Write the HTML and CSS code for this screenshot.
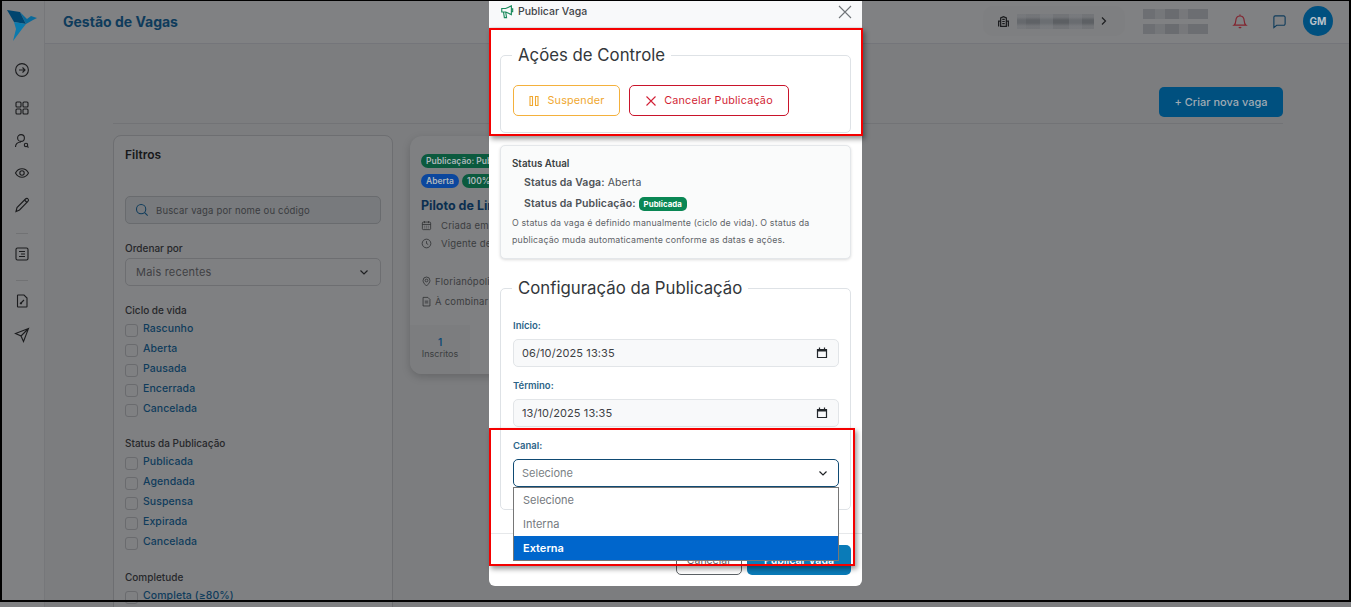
FILE: index.html
```html
<!DOCTYPE html>
<html lang="pt-BR">
<head>
<meta charset="utf-8">
<title>Gestão de Vagas</title>
<link rel="stylesheet" href="styles.css">
</head>
<body>
<div class="shot">
  <div class="app">
    <aside class="sidebar">
      <svg class="logo" viewBox="0 0 32 32" width="32" height="32"><polygon points="1,1 14,3 20,15 8,13" fill="#00456f"/><polygon points="14,3 20,15 27,11 31,9 25,7 21,10" fill="#0a6a9a"/><polygon points="8,13 20,15 16,20 7,32 10,20" fill="#0b7aad"/></svg>
      <svg class="ico m-first" viewBox="0 0 16 16"><circle cx="8" cy="8" r="6.400"/><path d="M5 8h6M8.500 5.500 11 8l-2.500 2.500"/></svg>
      <svg class="ico m-a" viewBox="0 0 16 16"><rect x="2" y="2" width="5" height="5" rx="1"/><rect x="9" y="2" width="5" height="5" rx="1"/><rect x="2" y="9" width="5" height="5" rx="1"/><rect x="9" y="9" width="5" height="5" rx="1"/></svg>
      <svg class="ico m-b" viewBox="0 0 16 16"><circle cx="7" cy="5" r="3.400"/><path d="M1.500 14c0-3 2-5 5.500-5"/><circle cx="12" cy="12" r="1.700"/><path d="m13.300 13.300 1.200 1.200"/></svg>
      <svg class="ico m-c" viewBox="0 0 16 16"><path d="M1.500 8C3 5.200 5.300 3.800 8 3.800s5 1.400 6.500 4.200c-1.500 2.800-3.800 4.200-6.500 4.200S3 10.800 1.500 8z"/><circle cx="8" cy="8" r="2.200"/></svg>
      <svg class="ico m-c" viewBox="0 0 16 16"><path d="M2 14.500 3 10.500 11.500 2c.8-.8 2-.8 2.600 0 .6.700.5 1.700-.2 2.400L5.500 13z"/><path d="m10.500 3 2.500 2.500"/></svg>
      <div class="rule m-d"></div>
      <svg class="ico m-e" viewBox="0 0 16 16"><rect x="2" y="2" width="12" height="12" rx="1.500"/><path d="M5 5.500h6M7 8h4M5 10.500h6"/></svg>
      <div class="rule m-f"></div>
      <svg class="ico m-h" viewBox="0 0 16 16"><path d="M4 2h6l3 3v8.500a.5.500 0 0 1-.5.500h-8.500a.5.500 0 0 1-.5-.5V2.500A.5.500 0 0 1 4 2z"/><path d="m6 11 4-4M6.300 9.500l1.500 1.500"/></svg>
      <svg class="ico m-g" viewBox="0 0 16 16"><path d="M14.500 1.500 1.500 6.500l5.500 2.500 2.500 5.500zM7 9l7.500-7.500"/></svg>
    </aside>
    <div class="main">
      <header class="topbar">
        <h1 class="title">Gestão de Vagas</h1>
        <div class="company">
          <svg class="ico-sm" viewBox="0 0 16 16"><path d="M4.500 14V3.500L8 2l3.500 1.500V14zM2 14V7.500h2.500M14 14V7.500h-2.500M6.500 5.500h3M6.500 8h3M6.500 10.500h3"/></svg>
          <span class="pixels pixels-company"></span>
          <svg class="chev" viewBox="0 0 8 10"><path d="m2 1.500 3.500 3.500L2 8.500"/></svg>
        </div>
        <div class="user">
          <span class="pixels pixels-user"></span>
          <span class="pixels pixels-user"></span>
        </div>
        <svg class="bell" viewBox="0 0 16 16"><path d="M2 12.200c1.300-1 1.700-2.200 1.800-4.500C4 4.800 5.600 3 8 3s4 1.800 4.200 4.700c.1 2.300.5 3.500 1.800 4.500zM8 3V1.500M6.800 14.200c.6.500 1.800.5 2.400 0"/></svg>
        <svg class="chat" viewBox="0 0 16 16"><path d="M3.500 2h9A1.500 1.500 0 0 1 14 3.500v7a1.500 1.500 0 0 1-1.500 1.500H5l-3 2.500v-11A1.500 1.500 0 0 1 3.500 2z"/></svg>
        <div class="avatar">GM</div>
      </header>
      <div class="content">
        <div class="toolbar"><button class="create">+ Criar nova vaga</button></div>
        <div class="columns">
          <section class="filters">
            <h2 class="filters-title">Filtros</h2>
            <div class="search">
              <svg class="search-ico" viewBox="0 0 16 16"><circle cx="7" cy="7" r="5.300"/><path d="m11 11 3.500 3.500"/></svg>
              <span>Buscar vaga por nome ou código</span>
            </div>
            <div class="f-label order-label">Ordenar por</div>
            <div class="order">
              <span>Mais recentes</span>
              <svg class="caret" viewBox="0 0 12 12"><path d="m2.500 4.500 3.500 3.500 3.500-3.500"/></svg>
            </div>
            <div class="f-label group-first">Ciclo de vida</div>
            <div class="check"><i></i>Rascunho</div>
            <div class="check"><i></i>Aberta</div>
            <div class="check"><i></i>Pausada</div>
            <div class="check"><i></i>Encerrada</div>
            <div class="check"><i></i>Cancelada</div>
            <div class="f-label group">Status da Publicação</div>
            <div class="check"><i></i>Publicada</div>
            <div class="check"><i></i>Agendada</div>
            <div class="check"><i></i>Suspensa</div>
            <div class="check"><i></i>Expirada</div>
            <div class="check"><i></i>Cancelada</div>
            <div class="f-label group group-last">Completude</div>
            <div class="check"><i></i>Completa (≥80%)</div>
          </section>
          <article class="job">
            <div class="job-body">
              <div class="chips"><span class="chip green">Publicação: Publicada</span></div>
              <div class="chips"><span class="chip blue">Aberta</span><span class="chip green">100%</span></div>
              <h3 class="job-title">Piloto de Linha</h3>
              <div class="meta"><svg class="ico-xs" viewBox="0 0 16 16"><rect x="2" y="3" width="12" height="11" rx="1.500"/><path d="M2 6.500h12M5 1.500v3M11 1.500v3M5 9h1M7.500 9h1M10 9h1M5 11.500h1M7.500 11.500h1M10 11.500h1"/></svg>Criada em</div>
              <div class="meta"><svg class="ico-xs" viewBox="0 0 16 16"><circle cx="8" cy="8" r="6.300"/><path d="M8 4.500V8l2.500 1.500"/></svg>Vigente de</div>
              <div class="place first"><svg class="ico-xs" viewBox="0 0 16 16"><path d="M8 14.500C5 11.500 3 9.300 3 6.500a5 5 0 0 1 10 0c0 2.800-2 5-5 8z"/><circle cx="8" cy="6.500" r="2"/></svg>Florianópolis</div>
              <div class="place"><svg class="ico-xs" viewBox="0 0 16 16"><path d="M3 2h7l3 3v9.500H3zM5.500 7.500h5M5.500 10h5"/></svg>À combinar</div>
            </div>
            <div class="job-foot"><b>1</b><span>Inscritos</span></div>
          </article>
        </div>
      </div>
    </div>
  </div>

  <div class="modal">
    <div class="modal-head">
      <svg class="mega" viewBox="0 0 16 16"><path d="M2 4h4.500L13 1v10L6.500 8H2zM4 8l1 6.500h2.500L6.500 8M13 4.500h1.500v3H13"/></svg>
      <span class="modal-title">Publicar Vaga</span>
      <svg class="close" viewBox="0 0 14 14"><path d="m1 1 12 12M13 1 1 13"/></svg>
    </div>
    <div class="modal-body">
      <fieldset class="box box-first">
        <legend>Ações de Controle</legend>
        <div class="actions">
          <button class="btn warn"><svg class="btn-ico" viewBox="0 0 12 12"><path d="M2 1.500h2.500v9H2zM7.500 1.500H10v9H7.500z"/></svg>Suspender</button>
          <button class="btn danger"><svg class="btn-ico" viewBox="0 0 12 12"><path d="m1.500 1.500 9 9M10.500 1.500l-9 9"/></svg>Cancelar Publicação</button>
        </div>
      </fieldset>
      <div class="status">
        <div class="status-head">Status Atual</div>
        <div class="status-line"><b>Status da Vaga:</b> Aberta</div>
        <div class="status-line second"><b>Status da Publicação:</b> <span class="pill">Publicada</span></div>
        <p class="note">O status da vaga é definido manualmente (ciclo de vida). O status da publicação muda automaticamente conforme as datas e ações.</p>
      </div>
      <fieldset class="box box-second">
        <legend>Configuração da Publicação</legend>
        <div class="fld-label">Início:</div>
        <div class="input"><span>06/10/2025 13:35</span><svg class="cal" viewBox="0 0 12 12"><path class="cal-top" d="M1.500 2h9v2.500h-9z"/><path d="M1.500 2.500h9v8h-9zM3.500 .5v2M8.500 .5v2"/></svg></div>
        <div class="fld-label">Término:</div>
        <div class="input"><span>13/10/2025 13:35</span><svg class="cal" viewBox="0 0 12 12"><path class="cal-top" d="M1.500 2h9v2.500h-9z"/><path d="M1.500 2.500h9v8h-9zM3.500 .5v2M8.500 .5v2"/></svg></div>
        <div class="fld-label">Canal:</div>
        <div class="select"><span>Selecione</span><svg class="caret dark" viewBox="0 0 12 12"><path d="m2.500 4.500 3.500 3.500 3.500-3.500"/></svg>
          <div class="listbox">
            <div class="option">Selecione</div>
            <div class="option">Interna</div>
            <div class="option on">Externa</div>
          </div>
        </div>
      </fieldset>
    </div>
    <div class="modal-foot">
      <button class="foot-btn ghost">Cancelar</button>
      <button class="foot-btn solid">Publicar Vaga</button>
    </div>
  </div>

  <div class="mark mark-top"></div>
  <div class="mark mark-bottom"></div>
  <div class="frame"></div>
</div>
</body>
</html>
```
FILE: styles.css
```css
* { box-sizing: border-box; }
html, body { margin: 0; height: 100%; overflow: hidden; }
body { font-family: Inter, "Liberation Sans", sans-serif; background: #7c7d7f; color: #2a2b2d; }
button { font-family: inherit; cursor: pointer; }
h1, h2, h3, p { margin: 0; }

.shot { position: relative; width: 1351px; height: 607px; overflow: hidden; }
.app { display: flex; height: 607px; }

.sidebar { width: 45px; flex: none; display: flex; flex-direction: column; align-items: center; background: #808183; border-right: 1px solid #76777a; padding-top: 9px; }
.logo { flex: none; }
.ico { width: 16px; height: 16px; fill: none; stroke: #1b1c1e; stroke-width: 1.100; flex: none; }
.m-first { margin-top: 21px; }
.m-a { margin-top: 22px; }
.m-b { margin-top: 17px; }
.m-c { margin-top: 16px; }
.m-d { margin-top: 20px; }
.m-e { margin-top: 12px; }
.m-f { margin-top: 18px; }
.m-h { margin-top: 12px; }
.m-g { margin-top: 18px; }
.rule { width: 12px; height: 1px; background: #717274; flex: none; }

.main { flex: 1; min-width: 0; display: flex; flex-direction: column; }
.topbar { height: 44px; flex: none; display: flex; align-items: center; padding: 0 18px 1px 18px; background: #808183; border-bottom: 1px solid #74757a; }
.title { font-size: 14px; font-weight: 700; color: #0e3b5b; flex: 1; }
.company { width: 142px; height: 30px; display: flex; align-items: center; background: #7e7f81; border-radius: 10px; padding-left: 14px; }
.ico-sm { width: 13px; height: 13px; fill: none; stroke: #1b1c1e; stroke-width: 1.500; flex: none; }
.pixels { display: block; }
.pixels-company { width: 77px; height: 15px; margin-left: 7px; background-image: linear-gradient(180deg, rgba(132,133,136,.55) 0 20%, rgba(132,133,136,0) 40% 60%, rgba(132,133,136,.55) 80%), linear-gradient(90deg, #66696d 0 12%, #5f6266 12% 30%, #6b6e72 30% 47%, #5c5f63 47% 68%, #696c70 68% 84%, #5d6064 84%); }
.chev { width: 8px; height: 10px; margin-left: 6px; fill: none; stroke: #1e1f21; stroke-width: 1.200; }
.user { margin-left: 18px; width: 65px; display: flex; flex-direction: column; gap: 5px; }
.pixels-user { height: 10px; width: 65px; background-image: linear-gradient(90deg, #6d6f73 0 18%, #75777a 18% 34%, #6a6c70 34% 56%, #77787b 56% 70%, #6c6e72 70%); }
.bell { width: 16px; height: 16px; margin-left: 24px; fill: none; stroke: #82242f; stroke-width: 1.200; flex: none; }
.chat { width: 15px; height: 15px; margin-left: 24px; fill: none; stroke: #0f3c5c; stroke-width: 1.200; flex: none; }
.avatar { width: 30px; height: 30px; margin-left: 16px; border-radius: 50%; background: #00507f; color: #b8c2ca; font-size: 10px; font-weight: 700; display: flex; align-items: center; justify-content: center; flex: none; }

.content { padding: 0 68px; flex: 1; min-height: 0; }
.toolbar { height: 80px; display: flex; justify-content: flex-end; align-items: flex-start; padding-top: 43px; border-bottom: 1px solid #727376; }
.create { width: 124px; height: 30px; border: 0; border-radius: 5px; background: #00507f; color: #a0abb4; font-size: 11px; font-weight: 500; }
.columns { display: flex; gap: 17px; align-items: flex-start; padding-top: 11px; }

.filters { width: 280px; flex: none; height: 520px; background: #7f8082; border: 1px solid #6d6e71; border-radius: 8px; padding: 11px 11px 0 11px; }
.filters-title { font-size: 12px; line-height: 15px; font-weight: 600; color: #17181a; }
.search { margin-top: 34px; height: 28px; border: 1px solid #696b6e; border-radius: 5px; background: #787a7d; display: flex; align-items: center; padding-left: 9px; color: #3a3c40; font-size: 9.500px; letter-spacing: .17px; }
.search-ico { width: 14px; height: 14px; fill: none; stroke: #0f3c5c; stroke-width: 1.200; margin-right: 7px; }
.f-label { font-size: 10px; line-height: 14px; font-weight: 500; color: #26272a; }
.order-label { margin-top: 17px; }
.order { margin-top: 3px; height: 28px; border: 1px solid #6d6e71; border-radius: 5px; display: flex; align-items: center; justify-content: space-between; padding: 0 10px; color: #3f4144; font-size: 11px; letter-spacing: .2px; }
.caret { width: 12px; height: 12px; fill: none; stroke: #1f2022; stroke-width: 1.200; }
.caret.dark { stroke: #1f2226; }
.group-first { margin-top: 17px; }
.group { margin-top: 14px; }
.group-last { margin-top: 15px; }
.check { height: 20px; display: flex; align-items: flex-start; color: #0f3c5c; font-size: 10.500px; font-weight: 500; line-height: 14px; letter-spacing: .08px; }
.group-first + .check, .group + .check { margin-top: 5px; }
.check i { width: 13px; height: 13px; margin: 2px 5px 0 0; border: 1px solid #6a6b6e; border-radius: 3px; flex: none; }

.job { width: 300px; flex: none; height: 238px; margin-top: 1px; background: #7f8082; border-radius: 12px; box-shadow: 0 3px 8px rgba(0,0,0,.18); display: flex; flex-direction: column; overflow: hidden; }
.job-body { flex: 1; padding: 18px 11px 0 11px; }
.chips { display: flex; gap: 3px; margin-bottom: 6px; }
.chip { height: 14px; border-radius: 7px; padding: 0 5px; font-size: 8.500px; font-weight: 600; line-height: 14px; color: #aeb6bb; white-space: nowrap; }
.green { background: #0b5a3e; }
.blue { background: #0b479e; }
.job-title { margin-top: 10px; font-size: 12.500px; line-height: 16px; font-weight: 700; color: #0b2f50; white-space: nowrap; }
.meta { display: flex; align-items: center; margin-top: 5px; height: 13px; font-size: 9.500px; color: #3b3d40; white-space: nowrap; letter-spacing: .2px; }
.job-title + .meta { margin-top: 5px; }
.meta .ico-xs { margin-right: 9px; }
.ico-xs { width: 11px; height: 11px; fill: none; stroke: #2b2c2f; stroke-width: 1.100; flex: none; margin-right: 3px; }
.place { display: flex; align-items: center; margin-top: 7px; height: 13px; font-size: 9.500px; color: #3b3d40; letter-spacing: .2px; white-space: nowrap; }
.place.first { margin-top: 25px; }
.job-foot { height: 49px; flex: none; background: #7c7d7f; display: flex; flex-direction: column; width: 60px; align-items: center; padding: 11px 0 0 0; }
.job-foot b { font-size: 10px; line-height: 12px; font-weight: 600; color: #0e4a76; }
.job-foot span { font-size: 9px; line-height: 12px; color: #3b3d40; }

.modal { position: absolute; left: 489px; top: 0; width: 373px; height: 586px; background: #fff; border-radius: 0 0 6px 6px; display: flex; flex-direction: column; }
.modal-head { height: 28px; flex: none; display: flex; align-items: flex-start; padding: 5px 10px 0 11px; background: #f8f9fa; border-bottom: 1px solid #e6e8ea; }
.mega { width: 14px; height: 14px; fill: none; stroke: #1a8a5c; stroke-width: 1.300; margin: 0 4px 0 0; }
.modal-title { flex: 1; font-size: 10.500px; line-height: 14px; font-weight: 500; color: #3f4448; }
.close { width: 14px; height: 14px; fill: none; stroke: #707478; stroke-width: 1.100; }
.modal-body { flex: 1; padding: 0 11px; }
.box { margin: 0; border: 1px solid #dee2e6; border-radius: 5px; padding: 18px 11px 0 12px; min-width: 0; }
.box legend { margin-left: -1px; padding: 0 6px; font-size: 16.800px; line-height: 24px; font-weight: 400; color: #33373b; }
.box-first { margin-top: 15px; height: 90px; }
.box-second { margin-top: 17px; height: 234px; padding-top: 19px; }
.actions { display: flex; gap: 9px; }
.btn { height: 31px; background: #fff; border-radius: 5px; font-size: 10.800px; font-weight: 400; display: flex; align-items: center; justify-content: center; padding: 0; letter-spacing: .2px; }
.btn-ico { width: 12px; height: 12px; fill: none; stroke-width: 1.100; margin-right: 7px; stroke: currentColor; }
.warn { width: 107px; border: 1px solid #f4b13d; color: #f0a830; }
.danger { width: 160px; border: 1px solid #c9142b; color: #d21f35; }

.status { margin-top: 12px; height: 114px; background: #fafbfb; border: 1px solid #e4e7ea; border-radius: 5px; box-shadow: 0 1px 3px rgba(0,0,0,.14); padding: 11px 12px 0 11px; color: #4d5257; }
.status-head { font-size: 9.800px; line-height: 14px; font-weight: 600; color: #3b3f43; }
.status-line { margin-top: 4px; margin-left: 12px; font-size: 10.500px; line-height: 16px; letter-spacing: .08px; display: flex; align-items: center; gap: 3px; }
.status-line.second { margin-top: 5px; }
.status-line b { font-weight: 600; }
.pill { height: 14px; padding: 0 5px; border-radius: 5px; background: #0a8754; color: #fff; font-size: 7.800px; font-weight: 700; line-height: 14px; }
.note { margin-top: 2px; font-size: 8.800px; line-height: 17px; color: #5f6368; letter-spacing: .17px; }

.fld-label { font-size: 9.500px; line-height: 14px; font-weight: 600; color: #2c6488; margin-bottom: 6px; }
.input { height: 28px; margin-bottom: 12px; background: #f8f9fa; border: 1px solid #e2e5e8; border-radius: 5px; display: flex; align-items: center; justify-content: space-between; padding: 0 10px 0 8px; font-size: 11px; color: #3d4145; letter-spacing: .1px; }
.cal { width: 12px; height: 12px; fill: none; stroke: #23272b; stroke-width: 1.200; }
.cal-top { fill: #23272b; stroke: none; }
.select { position: relative; height: 28px; border: 1px solid #0f4a73; border-radius: 5px; display: flex; align-items: center; justify-content: space-between; padding: 0 9px 0 8px; font-size: 11px; color: #7a7f84; }
.listbox { position: absolute; left: -1px; top: 27px; width: 326px; background: #fff; border: 1px solid #767676; z-index: 2; }
.option { height: 24px; padding: 0 9px; display: flex; align-items: center; font-size: 11px; color: #75797e; }
.option.on { background: #0066cc; color: #fff; font-weight: 600; }

.modal-foot { height: 53px; flex: none; border-top: 1px solid #e6e8ea; display: flex; justify-content: flex-end; gap: 5px; padding: 11px 11px 0 0; }
.foot-btn { height: 30px; border-radius: 5px; font-size: 10.500px; padding: 0; }
.ghost { width: 66px; background: #fff; border: 1px solid #5c6165; color: #5c6165; }
.solid { width: 104px; background: #0a7bb8; border: 0; color: #fff; font-weight: 600; }

.mark { position: absolute; border: 2px solid #f40000; box-shadow: 2px 3px 5px rgba(0,0,0,.4); pointer-events: none; z-index: 3; }
.mark-top { left: 489px; top: 28px; width: 374px; height: 108px; }
.mark-bottom { left: 489px; top: 428px; width: 366px; height: 138px; }
.frame { position: absolute; left: 0; top: 0; width: 1351px; height: 602px; border: 2px solid #000; border-top-width: 1px; pointer-events: none; z-index: 4; }
```
